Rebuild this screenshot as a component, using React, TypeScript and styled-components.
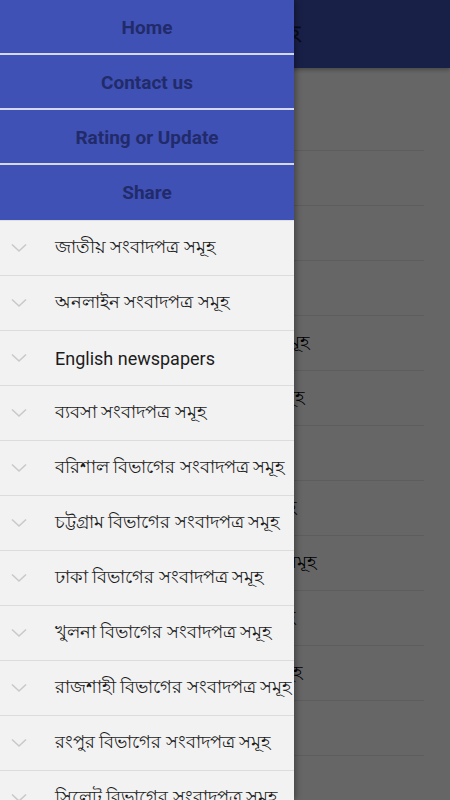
import React from "react";
import styled, { createGlobalStyle } from "styled-components";

const GlobalStyle = createGlobalStyle`
  html, body {
    margin: 0;
    padding: 0;
    width: 450px;
    height: 800px;
    overflow: hidden;
  }
  body {
    font-family: Roboto, "Noto Sans", sans-serif;
  }
`;

const Screen = styled.div`
  position: relative;
  width: 450px;
  height: 800px;
  overflow: hidden;
  background: #ffffff;
`;

const AppBar = styled.header`
  height: 68px;
  background: #3f51b5;
  display: flex;
  align-items: center;
  padding-left: 72px;
  box-shadow: 0 2px 4px rgba(0, 0, 0, 0.3);
`;

const AppTitle = styled.h1`
  margin: 0;
  font-size: 21px;
  font-weight: bold;
  color: #14193d;
  white-space: nowrap;
`;

const PageList = styled.ul`
  list-style: none;
  margin: 0;
  padding: 28px 26px 0 26px;
`;

const PageRow = styled.li`
  height: 54px;
  border-bottom: 1px solid #e8e8e8;
  display: flex;
  align-items: center;
  padding-left: 54px;
  font-size: 18px;
  color: #000000;
  white-space: nowrap;
`;

const Scrim = styled.div`
  position: absolute;
  inset: 0;
  background: rgba(0, 0, 0, 0.6);
`;

const Drawer = styled.nav`
  position: absolute;
  top: 0;
  left: 0;
  bottom: 0;
  width: 294px;
  background: #f2f2f2;
  box-shadow: 2px 0 6px rgba(0, 0, 0, 0.35);
  display: flex;
  flex-direction: column;
  overflow: hidden;
`;

const MenuButton = styled.button<{ $last?: boolean }>`
  box-sizing: border-box;
  height: 55px;
  flex-shrink: 0;
  border: none;
  border-bottom: ${p => (p.$last ? "none" : "2px solid #d5d9f0")};
  background: #3f51b5;
  color: #222b6a;
  font-family: Roboto, sans-serif;
  font-size: 19px;
  font-weight: bold;
  padding: ${p => (p.$last ? "0" : "2px 0 0")};
  cursor: pointer;
`;

const CategoryList = styled.ul`
  list-style: none;
  margin: 0;
  padding: 0;
  border-top: 1px solid #e0e0e0;
`;

const Category = styled.li`
  height: 54px;
  border-bottom: 1px solid #dcdcdc;
  display: flex;
  align-items: center;
  white-space: nowrap;
`;

const Chevron = styled.svg`
  width: 16px;
  height: 10px;
  margin: 0 28px 0 11px;
  flex-shrink: 0;
`;

const CategoryText = styled.span`
  font-size: 18px;
  color: #1c1c1c;
`;

const menu = ["Home", "Contact us", "Rating or Update", "Share"];

const categories = [
  "জাতীয় সংবাদপত্র সমূহ",
  "অনলাইন সংবাদপত্র সমূহ",
  "English newspapers",
  "ব্যবসা সংবাদপত্র সমূহ",
  "বরিশাল বিভাগের সংবাদপত্র সমূহ",
  "চট্টগ্রাম বিভাগের সংবাদপত্র সমূহ",
  "ঢাকা বিভাগের সংবাদপত্র সমূহ",
  "খুলনা বিভাগের সংবাদপত্র সমূহ",
  "রাজশাহী বিভাগের সংবাদপত্র সমূহ",
  "রংপুর বিভাগের সংবাদপত্র সমূহ",
  "সিলেট বিভাগের সংবাদপত্র সমূহ",
];

const pageRows = [...categories, "ম্যাগাজিন"];

function ChevronDown() {
  return (
    <Chevron viewBox="0 0 16 10">
      <path d="M1 1.5 L8 8 L15 1.5" fill="none" stroke="#c9c9c9" strokeWidth="1.6" />
    </Chevron>
  );
}

export default function App() {
  return (
    <Screen>
      <GlobalStyle />
      <AppBar>
        <AppTitle>বাংলাদেশের সংবাদপত্র সমূহ</AppTitle>
      </AppBar>
      <PageList>
        {pageRows.map((row, i) => (
          <PageRow key={i}>{row}</PageRow>
        ))}
      </PageList>
      <Scrim />
      <Drawer>
        {menu.map((label, i) => (
          <MenuButton key={label} $last={i === menu.length - 1}>
            {label}
          </MenuButton>
        ))}
        <CategoryList>
          {categories.map(name => (
            <Category key={name}>
              <ChevronDown />
              <CategoryText>{name}</CategoryText>
            </Category>
          ))}
        </CategoryList>
      </Drawer>
    </Screen>
  );
}
